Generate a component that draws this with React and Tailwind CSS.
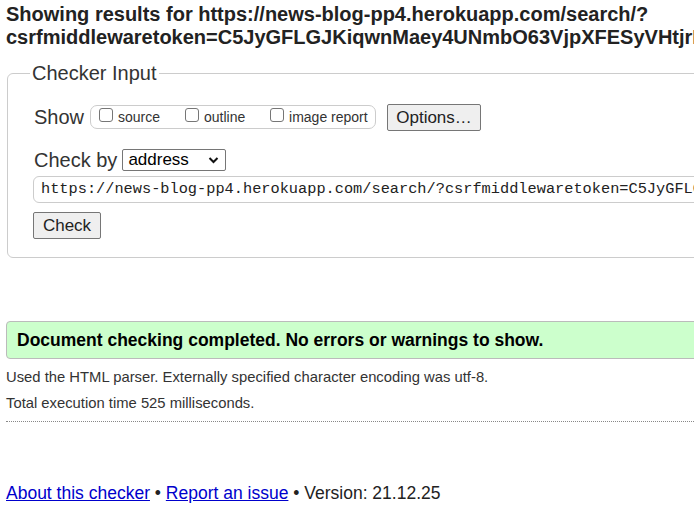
export default function App() {
  const font = { fontFamily: '"Liberation Sans", Arial, sans-serif' };
  return (
    <div className="w-[694px] h-[519px] overflow-hidden bg-white text-[#222]" style={font}>
      <div className="pl-[6px] pt-[3px] whitespace-nowrap font-bold text-[20px] leading-[23px] text-[#222]">
        <div>Showing results for https://news-blog-pp4.herokuapp.com/search/?</div>
        <div>csrfmiddlewaretoken=C5JyGFLGJKiqwnMaey4UNmbO63VjpXFESyVHtjrK4mQ</div>
      </div>
      <fieldset className="ml-[7px] mt-[12px] w-[1200px] border border-[#ccc] rounded-[6px] pl-[26px] pb-[18px] pt-0">
        <legend className="px-[2px] ml-[-4px] text-[20px] leading-[24px] text-[#333]">Checker Input</legend>
        <div className="flex items-center mt-[18px] h-[28px]">
          <span className="text-[20px] text-[#333] mr-[6px]">Show</span>
          <div className="flex items-center h-[24px] w-[286px] border border-[#ccc] rounded-[7px] pl-[8px] text-[14px] text-[#333]">
            <label className="flex items-center w-[86px]">
              <span className="inline-block w-[14px] h-[14px] border border-[#767676] rounded-[3px] bg-white mr-[5px] mt-[-4px]"></span>
              source
            </label>
            <label className="flex items-center w-[85px]">
              <span className="inline-block w-[14px] h-[14px] border border-[#767676] rounded-[3px] bg-white mr-[5px] mt-[-4px]"></span>
              outline
            </label>
            <label className="flex items-center">
              <span className="inline-block w-[14px] h-[14px] border border-[#767676] rounded-[3px] bg-white mr-[5px] mt-[-4px]"></span>
              image report
            </label>
          </div>
          <button className="ml-[11px] h-[27px] w-[94px] border border-[#767676] rounded-[2px] bg-[#efefef] text-[17px] text-[#222]">Options…</button>
        </div>
        <div className="flex items-center mt-[17px] h-[24px]">
          <span className="text-[20px] text-[#333] mr-[5px]">Check by</span>
          <div className="flex items-center justify-between w-[104px] h-[22px] border border-[#767676] rounded-[2px] pl-[5px] pr-[6px] text-[17px] text-black">
            <span>address</span>
            <svg width="11" height="8" viewBox="0 0 11 8"><path d="M1.5 2 L5.5 6 L9.5 2" stroke="#111" strokeWidth="2" fill="none" /></svg>
          </div>
        </div>
        <div className="mt-[4px] h-[27px] ml-[-1px] border border-[#ccc] rounded-[6px] flex items-center pl-[7px] whitespace-nowrap text-[15.3px] text-[#222]" style={{ fontFamily: '"Liberation Mono", "DejaVu Sans Mono", monospace' }}>
          https://news-blog-pp4.herokuapp.com/search/?csrfmiddlewaretoken=C5JyGFLGJKiqwnMaey4UNmbO63VjpXFESyVHtjrK4mQ
        </div>
        <button className="mt-[9px] ml-[-1px] h-[27px] w-[68px] border border-[#767676] rounded-[2px] bg-[#efefef] text-[17px] text-[#222]">Check</button>
      </fieldset>
      <div className="ml-[6px] mt-[63px] w-[1200px] h-[38px] bg-[#ccffcc] border border-[#bbb] rounded-[4px] flex items-center pl-[10px] font-bold text-[17.5px] text-black whitespace-nowrap">
        Document checking completed. No errors or warnings to show.
      </div>
      <p className="ml-[6px] mt-[9px] text-[14.8px] leading-[19px] text-[#333]">Used the HTML parser. Externally specified character encoding was utf-8.</p>
      <p className="ml-[6px] mt-[7px] text-[14.8px] leading-[19px] text-[#333]">Total execution time 525 milliseconds.</p>
      <div className="ml-[6px] mt-[8px] w-[1200px] border-t border-dotted border-[#888]"></div>
      <div className="ml-[6px] mt-[58px] text-[17.5px] text-[#222] whitespace-nowrap">
        <a href="#" className="text-[#00c] underline">About this checker</a>
        {' • '}
        <a href="#" className="text-[#00c] underline">Report an issue</a>
        {' • Version: 21.12.25'}
      </div>
    </div>
  );
}
